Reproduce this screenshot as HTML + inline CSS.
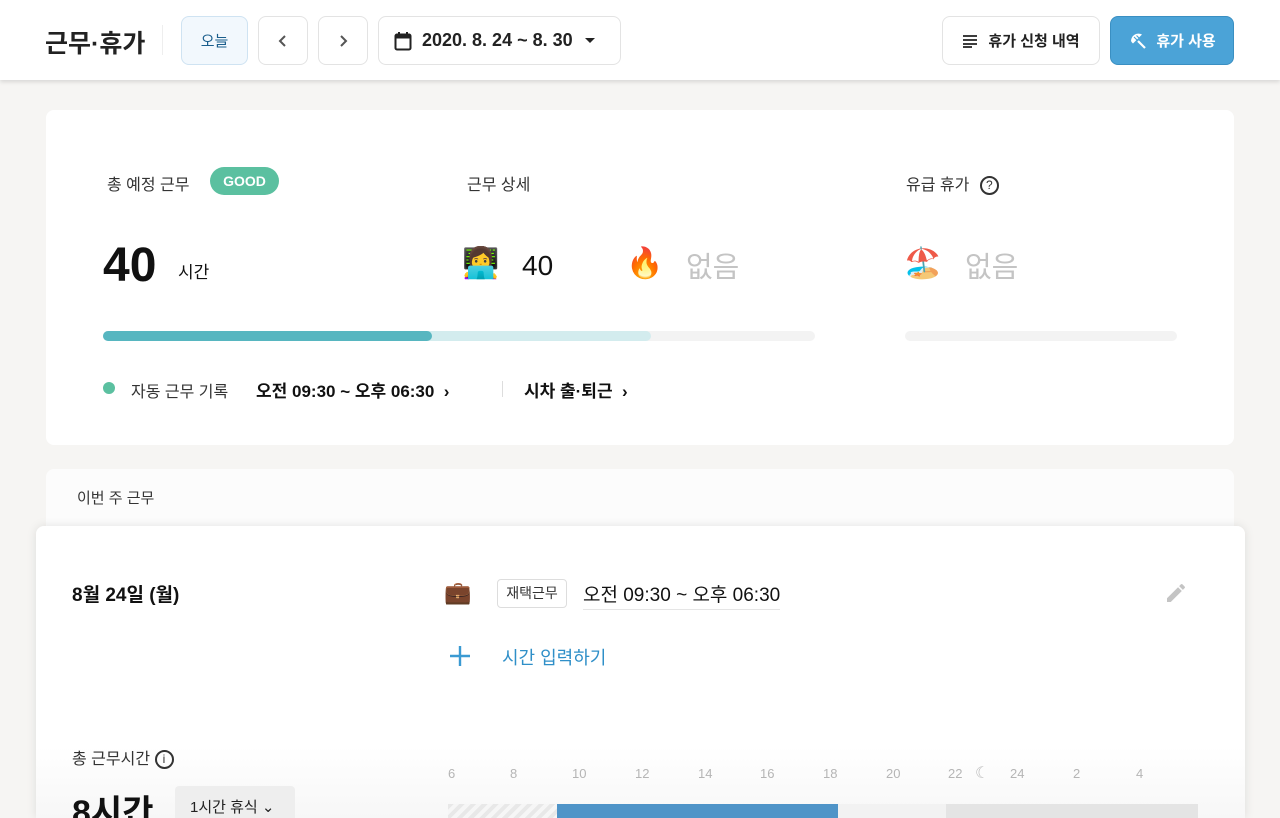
<!DOCTYPE html>
<html><head><meta charset="utf-8"><style>
*{box-sizing:border-box;margin:0;padding:0}
html,body{width:1280px;height:818px;overflow:hidden}
body{background:#f6f5f3;font-family:"Liberation Sans","Noto Sans CJK KR",sans-serif;color:#222;position:relative}
.hdr{position:absolute;left:0;top:0;width:1280px;height:80px;background:#fff;box-shadow:0 2px 4px rgba(0,0,0,.12)}
.btn{position:absolute;top:16px;height:49px;border:1px solid #e3e3e3;border-radius:8px;background:#fff;display:flex;align-items:center;justify-content:center;font-size:16px;font-weight:bold;color:#222}
.card{position:absolute;left:46px;top:110px;width:1188px;height:335px;background:#fff;border-radius:8px}
.abs{position:absolute;white-space:nowrap}
.gray{color:#333;font-size:16px}
.q{display:inline-block;width:19px;height:19px;border:2px solid #333;border-radius:50%;font-size:12px;text-align:center;line-height:15px;vertical-align:middle}
</style></head><body>
<div class="hdr">
 <div class="abs" style="left:45px;top:24px;font-size:25px;font-weight:bold;color:#222">근무·휴가</div>
 <div class="abs" style="left:162px;top:25px;width:1px;height:30px;background:#eee"></div>
 <div class="btn" style="left:181px;width:67px;background:#f2f8fd;border-color:#cfe3f2;color:#1a5e8c;font-weight:normal;font-size:15px">오늘</div>
 <div class="btn" style="left:258px;width:50px"><svg width="14" height="14" viewBox="0 0 14 14"><path d="M9 2L4 7l5 5" stroke="#555" stroke-width="2" fill="none"/></svg></div>
 <div class="btn" style="left:318px;width:50px"><svg width="14" height="14" viewBox="0 0 14 14"><path d="M5 2l5 5-5 5" stroke="#555" stroke-width="2" fill="none"/></svg></div>
 <div class="btn" style="left:378px;width:243px;justify-content:flex-start;padding-left:15px;font-size:18px">
  <svg width="18" height="20" viewBox="0 0 18 20" style="margin-right:10px"><rect x="1.5" y="3.5" width="15" height="15" rx="1.5" fill="none" stroke="#222" stroke-width="2"/><rect x="1.5" y="3.5" width="15" height="4" fill="#222"/><path d="M5 1v4M13 1v4" stroke="#222" stroke-width="2"/></svg>
  2020. 8. 24 ~ 8. 30<span style="margin-left:12px;border:5px solid transparent;border-top:5px solid #222;margin-top:5px"></span></div>
 <div class="btn" style="left:942px;width:158px;font-size:15px"><svg width="16" height="14" viewBox="0 0 16 14" style="margin-right:10px"><path d="M1 2h14M1 6h14M1 10h14M1 13h9" stroke="#222" stroke-width="1.8"/></svg>휴가 신청 내역</div>
 <div class="btn" style="left:1110px;width:124px;background:#4ba3d7;border-color:#3a8fc2;color:#fff;font-size:15px"><svg width="20" height="20" viewBox="0 0 20 20" style="margin-right:8px"><path d="M3 10A7.5 7.5 0 0 1 14 3.5L5 12.5A7.5 7.5 0 0 1 3 10z" fill="#fff"/><path d="M6 6l3 3M8.5 4.5l2.5 2.5" stroke="#4ba3d7" stroke-width="1.2"/><path d="M10 10l7 7" stroke="#fff" stroke-width="2.2"/></svg>휴가 사용</div>
</div>

<div class="card">
 <div class="abs gray" style="left:61px;top:61px">총 예정 근무</div>
 <div class="abs" style="left:164px;top:57px;width:69px;height:28px;border-radius:14px;background:#5bc0a0;color:#fff;font-size:14px;font-weight:bold;text-align:center;line-height:28px">GOOD</div>
 <div class="abs" style="left:57px;top:128px;font-size:48px;font-weight:bold;color:#111">40</div>
 <div class="abs" style="left:132px;top:148px;font-size:17px;color:#111">시간</div>
 <div class="abs" style="left:57px;top:221px;width:712px;height:10px;border-radius:5px;background:#f3f3f3"></div>
 <div class="abs" style="left:57px;top:221px;width:548px;height:10px;border-radius:5px;background:#d3ecee"></div>
 <div class="abs" style="left:57px;top:221px;width:329px;height:10px;border-radius:5px;background:#57b6c0"></div>
 <div class="abs" style="left:57px;top:272px;width:12px;height:12px;border-radius:6px;background:#5bc0a0"></div>
 <div class="abs gray" style="left:85px;top:268px">자동 근무 기록</div>
 <div class="abs" style="left:210px;top:267px;font-size:17px;font-weight:bold;color:#111">오전 09:30 ~ 오후 06:30 &nbsp;›</div>
 <div class="abs" style="left:456px;top:271px;width:1px;height:16px;background:#ddd"></div>
 <div class="abs" style="left:478px;top:267px;font-size:17px;font-weight:bold;color:#111">시차 출·퇴근 &nbsp;›</div>

 <div class="abs gray" style="left:421px;top:61px">근무 상세</div>
 <div class="abs" style="left:416px;top:136px;font-size:30px">👩‍💻</div>
 <div class="abs" style="left:476px;top:140px;font-size:28px;color:#111">40</div>
 <div class="abs" style="left:580px;top:136px;font-size:30px">🔥</div>
 <div class="abs" style="left:640px;top:134px;font-size:29px;color:#c4c4c4">없음</div>

 <div class="abs gray" style="left:860px;top:61px">유급 휴가 <span class="q" style="margin-left:6px">?</span></div>
 <div class="abs" style="left:858px;top:136px;font-size:30px">🏖️</div>
 <div class="abs" style="left:919px;top:134px;font-size:29px;color:#c4c4c4">없음</div>
 <div class="abs" style="left:859px;top:221px;width:272px;height:10px;border-radius:5px;background:#f3f3f3"></div>
</div>

<div class="abs" style="left:46px;top:469px;width:1188px;height:70px;background:#fcfcfc;border-radius:8px 8px 0 0"></div>
<div class="abs" style="left:77px;top:487px;font-size:15px;color:#333">이번 주 근무</div>

<div class="abs" style="left:36px;top:526px;width:1209px;height:292px;border-radius:8px 8px 0 0;background:linear-gradient(#fff 0,#fff 220px,#f7f7f7 292px);box-shadow:0 0 10px rgba(0,0,0,.1)"></div>
<div class="abs" style="left:72px;top:580px;font-size:19px;font-weight:bold;color:#111">8월 24일 (월)</div>
<div class="abs" style="left:444px;top:580px;font-size:22px">💼</div>
<div class="abs" style="left:497px;top:579px;width:70px;height:29px;border:1px solid #ddd;border-radius:4px;font-size:14px;text-align:center;line-height:27px;color:#333">재택근무</div>
<div class="abs" style="left:583px;top:580px;font-size:19px;color:#111;border-bottom:1px solid #e5e5e5;padding-bottom:2px">오전 09:30 ~ 오후 06:30</div>
<svg class="abs" style="left:1164px;top:581px" width="24" height="24" viewBox="0 0 24 24"><path d="M3 17.25V21h3.75L17.81 9.94l-3.75-3.75L3 17.25zM20.71 7.04a1 1 0 0 0 0-1.41l-2.34-2.34a1 1 0 0 0-1.41 0l-1.83 1.83 3.75 3.75 1.83-1.83z" fill="#c4c4c4"/></svg>
<svg class="abs" style="left:449px;top:645px" width="22" height="22" viewBox="0 0 22 22"><path d="M11 1v20M1 11h20" stroke="#3a9ad2" stroke-width="2.4"/></svg>
<div class="abs" style="left:502px;top:644px;font-size:18px;color:#2f8fc8">시간 입력하기</div>

<div class="abs" style="left:72px;top:745px;font-size:16px;color:#333">총 근무시간 <span class="q">i</span></div>
<div class="abs" style="left:72px;top:785px;font-size:34px;font-weight:bold;color:#111">8시간</div>
<div class="abs" style="left:175px;top:786px;width:120px;height:40px;background:#eee;border-radius:4px;font-size:15px;padding:10px 0 0 15px;color:#222">1시간 휴식 ⌄</div>

<div class="abs" style="left:448px;top:766px;font-size:13px;color:#b5b5b5;width:760px;height:16px">
 <span class="abs" style="left:0">6</span><span class="abs" style="left:62px">8</span><span class="abs" style="left:124px">10</span><span class="abs" style="left:187px">12</span><span class="abs" style="left:250px">14</span><span class="abs" style="left:312px">16</span><span class="abs" style="left:375px">18</span><span class="abs" style="left:438px">20</span><span class="abs" style="left:500px">22</span><span class="abs" style="left:527px;color:#bbb;font-size:16px;top:-3px">☾</span><span class="abs" style="left:562px">24</span><span class="abs" style="left:625px">2</span><span class="abs" style="left:688px">4</span>
</div>
<div class="abs" style="left:448px;top:804px;width:110px;height:14px;background:repeating-linear-gradient(135deg,#e8e8e8 0 4px,#f6f6f6 4px 8px)"></div>
<div class="abs" style="left:557px;top:804px;width:281px;height:14px;background:#4f94c8"></div>
<div class="abs" style="left:838px;top:804px;width:108px;height:14px;background:#f2f2f2"></div>
<div class="abs" style="left:946px;top:804px;width:252px;height:14px;background:#e4e4e4"></div>
</body></html>
